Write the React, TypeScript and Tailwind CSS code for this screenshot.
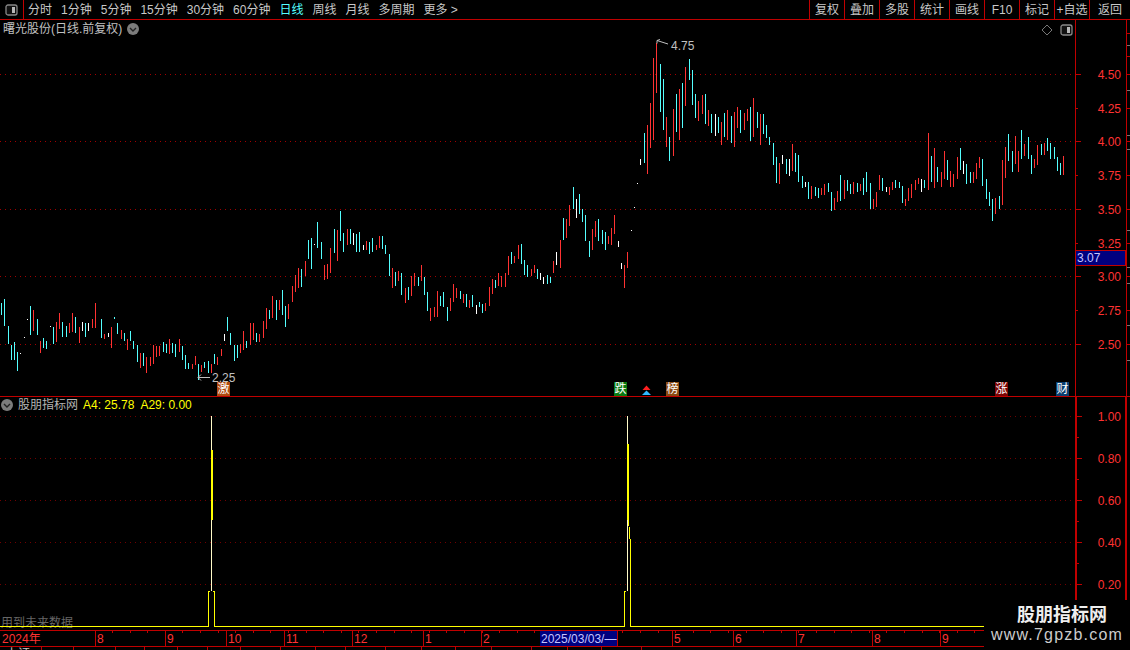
import React from 'react';

// ── K-line data, read off the chart ─────────────────────
// every block: [origin x, origin y, "colour x,top,bottom ..."], values in 1/3 px
const BLOCKS: [number, number, string][] = [
  [0, 280, 'c4,70,105 c13,57,137 c25,137,192 c34,195,240 c43,185,240 c52,215,272 w61,220,222 w73,172,174 w82,118,120 c91,78,165 r100,90,152 c112,117,165 r121,183,218 c130,175,205 c139,183,207 w151,139,141 c160,141,192 r169,125,185 r178,99,148 c187,125,172 c199,138,170 r208,130,160 r217,99,157 c226,112,159 r238,142,190 w247,126,152 c256,130,172 w265,130,152 r277,117,143 r286,70,145 c304,118,175 r313,162,177 w325,160,170 r334,142,204 c343,112,117 c352,130,162 r364,150,177 c373,160,183 r382,178,210 c391,153,183 c400,183,207 c412,195,246 r421,218,263 c430,220,258 r439,230,278 r451,230,258 r460,195,252 r469,198,230 r478,198,228 c490,187,215 c499,192,218 r508,178,222 c517,188,218 c526,192,230 r538,178,215 c547,198,240 c556,225,266 c565,250,266 r577,252,266 r586,228,255 c595,252,300 r604,255,277 c613,247,265 c625,243,278 r634,252,280 c643,222,252 r652,231,255 r664,207,228 w673,162,183 c682,111,153 c691,160,195 c703,195,243 c712,195,235 r721,192,220 r730,153,210 c739,183,205 r751,129,195 r760,129,180 c769,160,187 r778,162,187 r790,123,175 r799,84,147 c808,90,117 r817,48,114 c829,60,120 r838,60,90 c847,30,105 c856,78,140 r865,72,118 r877,18,66'],
  [220, 200, 'r226,225,275 r235,205,265 c244,207,260 r256,183,228 c265,120,177 c274,114,207 w283,132,134 c292,66,144 c304,126,177 r313,195,240 r322,192,237 r331,144,219 c343,87,159 r352,90,183 c361,33,123 c370,99,156 r382,87,135 c391,87,132 w400,99,135 c409,102,156 c418,96,156 w430,135,150 r439,123,150 c448,126,162 c457,114,156 r469,135,150 r478,108,144 c487,108,147 c496,135,162 c508,162,228 r517,204,264 c526,216,258 r535,213,243 c544,219,285 r556,264,309 c565,261,300 r574,228,288 r583,219,258 c595,231,258 r604,195,243 c613,231,285 c622,276,333 r631,324,363 r643,321,351 r652,273,351'],
  [420, 180, 'c61,348,378 c70,336,381 c82,381,423 r91,354,393 r100,312,366 r109,324,354 c121,333,357 r130,342,369 c139,342,381 r148,360,384 c157,345,381 w169,375,402 c178,366,381 c187,372,399 r196,369,393 r208,321,378 r217,297,342 c226,300,324 r235,279,318 r244,288,321 r256,279,321 r265,228,285 c274,216,252 r283,228,249 r295,195,237 c304,192,252 c313,240,285 c322,255,291 r334,267,288 r343,255,279 c352,267,297 w361,279,300 w370,291,312 c382,285,312 c391,291,309 r400,243,279 w409,216,255 r421,180,264 c430,114,180 r439,117,174 r448,75,138 c460,21,87 w469,57,114 c478,42,102 c487,87,126 c496,105,183 c508,183,231 r517,147,210 r526,123,171 c535,117,183 c547,150,192 c556,156,210 r565,168,192 r574,144,195 r583,105,162 w595,183,201 w604,249,267 r613,255,324 r622,216,264 w634,150,153 w643,81,84 w652,9,12'],
  [560, 30, 'w241,387,405 c253,309,399 r262,285,432 r271,219,354 r280,84,330 r289,39,189 c301,102,246 c310,147,300 r319,261,351 c328,321,393 r340,237,378 c349,192,306 r358,177,330 c367,159,294 r376,111,228 c388,87,150 c397,120,225 c406,192,264 r415,213,273 r427,195,252 c436,192,282 r445,240,288 c454,252,309 w466,252,318 c475,261,309 r484,276,345 c493,249,321 r502,240,330 c514,258,339 r523,246,351 r532,231,294 c541,240,309 r553,249,300 r562,237,273 c571,231,333 r580,204,321 c592,246,294 r601,252,345 c610,252,312 c619,285,324 c628,321,345 c640,339,405 c649,381,459 r658,399,462'],
  [780, 120, 'w7,105,132 c19,117,162 w28,117,168 r37,72,153 c46,99,156 c55,105,186 c67,168,204 w76,186,201 c85,186,237 r94,198,237 c106,201,228 c115,204,234 r124,204,225 r133,192,225 c145,189,216 c154,216,273 r163,234,270 r172,213,246 c181,165,243 r193,180,237 c202,180,213 c211,192,222 r220,186,222 c232,189,216 r241,192,213 c250,174,225 c259,156,216 c271,189,267 r280,237,267 r289,216,261 r298,165,210 c307,174,213 w319,201,216 r328,201,225 r337,186,210 c346,180,204 c358,186,204 c367,198,249 r376,237,258 r385,204,243 r394,192,234 r406,180,210 r415,174,192 w424,177,216 c433,180,204 r445,39,210 c454,108,186 r463,84,204 c472,141,186 r484,156,201 r493,93,177 c502,120,180 r511,153,201 r520,162,201 r532,111,177 c541,84,150 w550,123,162 c559,132,192 c571,156,189 r580,156,189 r589,129,177 r598,111,144 c607,117,198 c619,177,237 c628,216,258 c637,237,303 r646,234,282 c658,228,267'],
  [960, 120, 'r127,120,255 r136,81,174 c145,42,123 c157,93,156 r166,48,132 r175,93,156 c184,30,117 r193,72,108 c205,51,117 c214,105,162 r223,117,144 r232,75,135 c244,72,105 r253,69,105 c262,54,93 c271,69,117 c283,81,117 c292,111,153 c301,129,165 r310,108,165'],
];

function barPaths() {
  const out: Record<string, string> = { c: '', r: '', w: '' };
  for (const [ox, oy, data] of BLOCKS) {
    for (const item of data.split(' ')) {
      const [x, t, b] = item.slice(1).split(',').map(Number);
      const px = Math.floor(ox + x / 3) + 0.5;
      out[item[0]] += `M${px} ${Math.round(oy + t / 3)}V${Math.round(oy + b / 3)}`;
    }
  }
  return out;
}

const TABS = ['分时', '1分钟', '5分钟', '15分钟', '30分钟', '60分钟', '日线', '周线', '月线', '多周期', '更多 >'];
const TOOLS = ['复权', '叠加', '多股', '统计', '画线', 'F10', '标记', '+自选', '返回'];

const RED_LINE = '#c00000';
const RED_TEXT = '#ff3232';

const PRICE_MAJOR = [
  { y: 74, label: '4.50' },
  { y: 141, label: '4.00' },
  { y: 209, label: '3.50' },
  { y: 276, label: '3.00' },
  { y: 344, label: '2.50' },
];
const PRICE_MINOR = [
  { y: 108, label: '4.25' },
  { y: 175, label: '3.75' },
  { y: 243, label: '3.25' },
  { y: 310, label: '2.75' },
];
const LOWER_TICKS = [
  { y: 416, label: '1.00' },
  { y: 458, label: '0.80' },
  { y: 500, label: '0.60' },
  { y: 542, label: '0.40' },
  { y: 584, label: '0.20' },
];
const MONTHS = [
  { x: 95, label: '8' },
  { x: 165, label: '9' },
  { x: 226, label: '10' },
  { x: 284, label: '11' },
  { x: 352, label: '12' },
  { x: 423, label: '1' },
  { x: 481, label: '2' },
  { x: 672, label: '5' },
  { x: 733, label: '6' },
  { x: 796, label: '7' },
  { x: 872, label: '8' },
  { x: 940, label: '9' },
];
const BADGES = [
  { x: 217, text: '激', bg: 'bg-[#b04a10]' },
  { x: 614, text: '跌', bg: 'bg-[#0a7a12]' },
  { x: 666, text: '榜', bg: 'bg-[#8c4a12]' },
  { x: 995, text: '涨', bg: 'bg-[#7a0505]' },
  { x: 1056, text: '财', bg: 'bg-[#0b3f70]' },
];

function PanelIcon({ className }: { className: string }) {
  return (
    <svg className={className} width="13" height="12" viewBox="0 0 13 12">
      <rect x="1" y="1" width="11" height="10" rx="2" fill="#111" stroke="#888" strokeWidth="1.3" />
      <rect x="7" y="3" width="3" height="6" fill="#b8b8b8" />
    </svg>
  );
}

function RoundChevron({ className }: { className: string }) {
  return (
    <svg className={className} width="12" height="12" viewBox="0 0 12 12">
      <circle cx="6" cy="6" r="6" fill="#7c7c7c" />
      <path d="M3 5l3 3 3-3" fill="none" stroke="#222" strokeWidth="1.4" />
    </svg>
  );
}

function MainChart() {
  const bars = barPaths();
  return (
    <svg className="block" width="1130" height="376" viewBox="0 20 1130 376">
      <g shapeRendering="crispEdges">
        {PRICE_MAJOR.map(t => (
          <g key={t.y}>
            <line x1="0" x2="1075" y1={t.y + 0.5} y2={t.y + 0.5} stroke="#a00000" strokeDasharray="1 4" />
            <line x1="1075" x2="1081" y1={t.y + 0.5} y2={t.y + 0.5} stroke={RED_LINE} />
          </g>
        ))}
        {PRICE_MINOR.map(t => (
          <line key={t.y} x1="1075" x2="1078" y1={t.y + 0.5} y2={t.y + 0.5} stroke={RED_LINE} />
        ))}
        <path d={bars.c} stroke="#54ffff" fill="none" />
        <path d={bars.r} stroke="#ff3232" fill="none" />
        <path d={bars.w} stroke="#ffffff" fill="none" />
        <line x1="1075.5" x2="1075.5" y1="20" y2="396" stroke={RED_LINE} />
        <line x1="1126" x2="1126" y1="20" y2="396" stroke={RED_LINE} strokeWidth="1" />
        {[33, 56, 74, 108, 141, 175, 209, 243, 276, 310, 344].map(y => (
          <line key={y} x1="1126" x2="1130" y1={y + 0.5} y2={y + 0.5} stroke={RED_LINE} />
        ))}
        {[45, 90, 135, 149, 230, 267, 283, 325, 360].map(y => (
          <line key={y} x1="1127" x2="1130" y1={y + 0.5} y2={y + 0.5} stroke="#777" />
        ))}
      </g>
      <g fill={RED_TEXT} fontSize="12">
        {[...PRICE_MAJOR, ...PRICE_MINOR].map(t => (
          <text key={t.y} x="1121" y={t.y + 5} textAnchor="end">{t.label}</text>
        ))}
      </g>
      <rect x="1075.5" y="250.5" width="50" height="15" fill="#00007f" stroke={RED_LINE} />
      <text x="1077" y="262" fontSize="12" fill="#c4c4ff">3.07</text>

      {/* high / low markers */}
      <path d="M198 377.5h12M198 377.5l3-3M198 377.5l3 3" stroke="#c0c0c0" fill="none" />
      <text x="212" y="382" fontSize="12" fill="#c0c0c0">2.25</text>
      <path d="M657 40.5l11 3.5M657 40.5l3-1M657 40.5v3" stroke="#c0c0c0" fill="none" />
      <text x="671" y="50" fontSize="12" fill="#c0c0c0">4.75</text>

      {/* little double arrow next to 跌 */}
      <path d="M646.5 385.5l4 4.5h-8z" fill="#ff2020" />
      <path d="M646.5 390.5l4.5 4.5h-9z" fill="#30b8ff" />
    </svg>
  );
}

function LowerChart() {
  return (
    <svg className="block" width="1130" height="233" viewBox="0 397 1130 233">
      <g shapeRendering="crispEdges">
        {LOWER_TICKS.map(t => (
          <g key={t.y}>
            <line x1="0" x2="1075" y1={t.y + 0.5} y2={t.y + 0.5} stroke="#700000" strokeDasharray="1 4" />
            <line x1="1076" x2="1082" y1={t.y + 0.5} y2={t.y + 0.5} stroke={RED_LINE} />
            <line x1="1076" x2="1079" y1={t.y + 21.5} y2={t.y + 21.5} stroke={RED_LINE} />
          </g>
        ))}
        <rect x="1075" y="397" width="2" height="204" fill={RED_LINE} />
        <rect x="1125" y="397" width="2" height="204" fill={RED_LINE} />
      </g>
      <g fill={RED_TEXT} fontSize="12">
        {LOWER_TICKS.map(t => (
          <text key={t.y} x="1121" y={t.y + 5} textAnchor="end">{t.label}</text>
        ))}
      </g>
      <text x="1" y="627" fontSize="12" fill="#666666">用到未来数据</text>

      {/* A4 yellow, A29 pale on top */}
      <g shapeRendering="crispEdges" fill="none">
        <path
          d="M0 626.5H208.5V591.5H210M213 591.5H214.5V626.5H624.5V591.5H626M630.5 545V626.5H984"
          stroke="#ffff00"
        />
        <path d="M211.5 450V520M627.5 444V520" stroke="#ffff00" strokeWidth="2" />
        <path d="M211.5 416V450M211.5 520V591M627.5 416V444M627.5 520V591" stroke="#fffbc8" />
        <path d="M628.5 520L630.5 545" stroke="#ffff00" />
      </g>
    </svg>
  );
}

function DateAxis() {
  const small: number[] = [];
  for (let x = 112; x < 984; x += 17.6) small.push(Math.round(x));
  return (
    <svg className="block" width="1130" height="17" viewBox="0 630 1130 17">
      <g shapeRendering="crispEdges" stroke={RED_LINE}>
        <line x1="0" x2="1130" y1="630.5" y2="630.5" />
        <line x1="0" x2="1130" y1="646.5" y2="646.5" />
        {small.map(x => (
          <line key={x} x1={x + 0.5} x2={x + 0.5} y1="631" y2="633" />
        ))}
        {MONTHS.map(m => (
          <line key={m.x} x1={m.x + 0.5} x2={m.x + 0.5} y1="631" y2="646" />
        ))}
      </g>
      <g fill={RED_TEXT} fontSize="12">
        <text x="2" y="643">2024年</text>
        {MONTHS.map(m => (
          <text key={m.x} x={m.x + 2} y="643">{m.label}</text>
        ))}
      </g>
      <rect x="540" y="631" width="77" height="15" fill="#00007f" />
      <line x1="617.5" x2="617.5" y1="631" y2="646" stroke={RED_LINE} shapeRendering="crispEdges" />
      <text x="541" y="643" fontSize="12" fill="#c4c4ff">2025/03/03/—</text>
    </svg>
  );
}

export default function App() {
  return (
    <div className="relative w-[1130px] h-[650px] overflow-hidden bg-black text-[12px] leading-none font-['Liberation_Sans','Noto_Sans_CJK_SC',sans-serif]">
      {/* Toolbar */}
      <div className="flex h-[20px] border-b border-[#c00000] text-[#c8c8c8]">
        <div className="flex w-[24px] items-center justify-center border-r border-[#c00000]">
          <PanelIcon className="block" />
        </div>
        <div className="flex flex-1 items-center gap-[9px] pl-[4px]">
          {TABS.map(tab => (
            <span key={tab} className={tab === '日线' ? 'text-[#54ffff]' : ''}>{tab}</span>
          ))}
        </div>
        <div className="flex">
          {TOOLS.map(tool => (
            <div key={tool} className="flex w-[35px] items-center justify-center border-l border-[#c00000] last:w-[41px] whitespace-nowrap">
              {tool}
            </div>
          ))}
        </div>
      </div>

      {/* Price pane */}
      <div className="relative">
        <MainChart />
        <div className="absolute left-[3px] top-[3px] flex items-center gap-[5px] text-[#c0c0c0]">
          <span>曙光股份(日线.前复权)</span>
          <RoundChevron className="block" />
        </div>
        <svg className="absolute left-[1041px] top-[4px]" width="12" height="12" viewBox="0 0 12 12">
          <path d="M6 1l5 5-5 5-5-5z" fill="none" stroke="#777" />
        </svg>
        <PanelIcon className="absolute left-[1060px] top-[4px]" />
        {BADGES.map(b => (
          <span
            key={b.x}
            style={{ left: b.x }}
            className={`absolute top-[362px] flex h-[14px] w-[13px] items-center justify-center text-white ${b.bg}`}
          >
            {b.text}
          </span>
        ))}
      </div>

      {/* Indicator pane */}
      <div className="relative border-t border-[#c00000]">
        <LowerChart />
        <div className="absolute left-[1px] top-[2px] flex items-center">
          <RoundChevron className="block" />
          <span className="ml-[5px] text-[#b4b4b4]">股朋指标网</span>
          <span className="ml-[5px] text-[#ffff00]">A4: 25.78</span>
          <span className="ml-[6px] text-[#ffff00]">A29: 0.00</span>
        </div>
      </div>

      <DateAxis />

      {/* Status bar, only its top edge is on screen */}
      <div className="flex h-[3px] overflow-hidden text-[#c8c8c8]">
        {[42, 32, 42, 29, 33, 30, 33, 40, 35, 30, 40, 36, 34, 36, 40, 36, 34, 40].map((w, i) => (
          <div key={i} style={{ width: w }} className="h-[3px] border-r border-[#c00000] pt-[1px] pl-[6px]">
            {i === 0 ? '上证' : ''}
          </div>
        ))}
      </div>

      {/* Watermark over the corner */}
      <div className="absolute bottom-0 left-[984px] flex h-[50px] w-[146px] flex-col items-center bg-black pt-[5px]">
        <span className="ml-[10px] text-[18px] font-bold leading-[20px] text-[#eeeeee]">股朋指标网</span>
        <span className="mt-[1px] text-[16px] leading-[18px] tracking-[1.2px] text-[#cccccc]">www.7gpzb.com</span>
      </div>
    </div>
  );
}
